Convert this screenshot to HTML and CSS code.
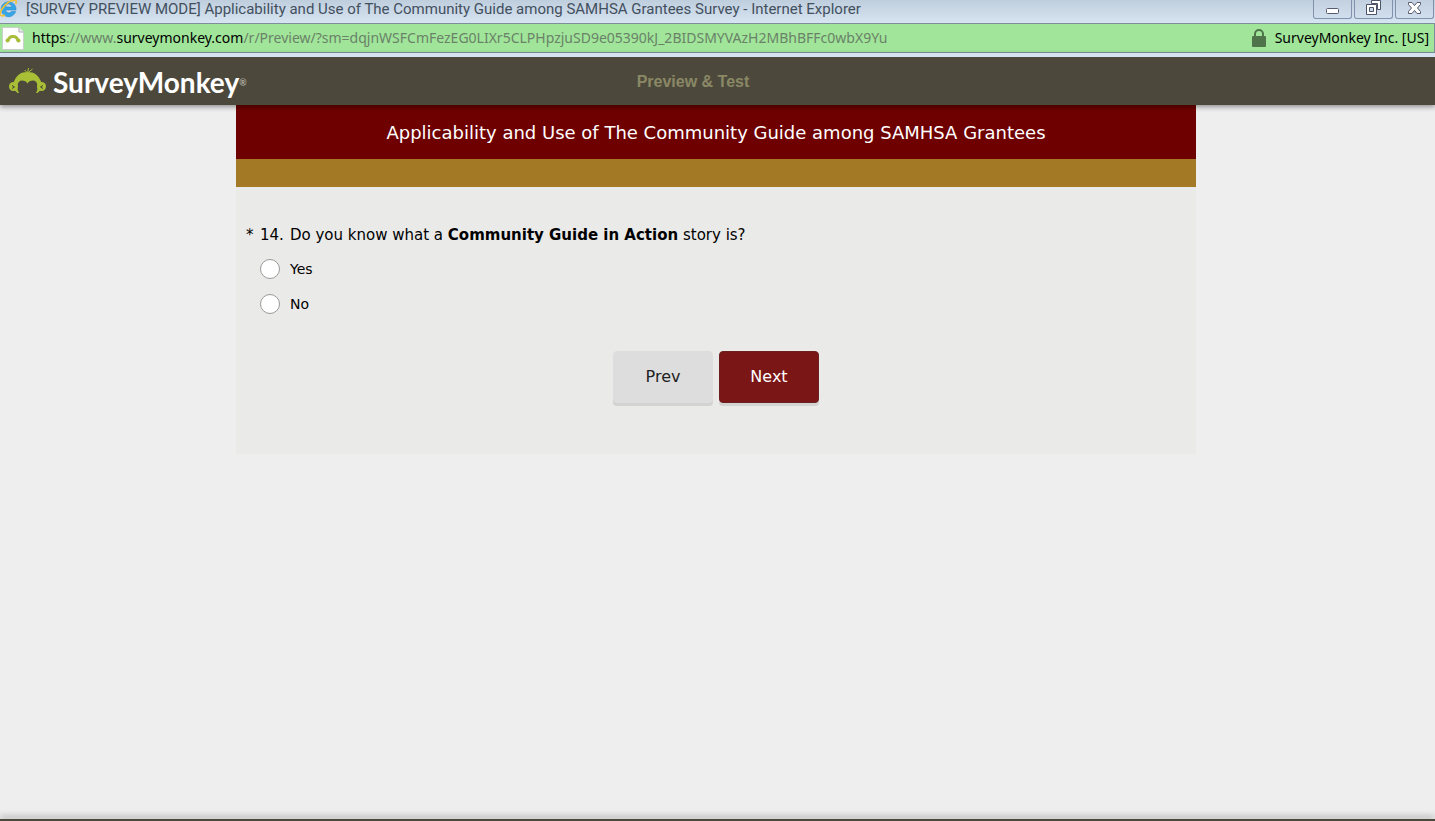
FILE: index.html
```html
<!DOCTYPE html>
<html lang="en">
<head>
  <meta charset="utf-8">
  <title>[SURVEY PREVIEW MODE] Applicability and Use of The Community Guide among SAMHSA Grantees Survey</title>
  <link rel="stylesheet" href="styles.css">
</head>
<body>
  <div class="title-bar">
    <svg class="ie-icon" width="18" height="18" viewBox="0 0 18 18" aria-hidden="true">
      <path d="M16 10H5.500a3.300 3.300 0 0 0 6 1.500h4.200A7.500 7.500 0 1 1 16 8.500zM5.600 7h6.200a3.100 3.100 0 0 0-6.200 0z" fill="#35a7e8" stroke="#1c7fc2" stroke-width=".5" fill-rule="evenodd"/>
      <path d="M0 14C1 8 8 1 14 0c3 0 2.500 3 1.500 4M0 13c0 4 3 3 5 2" fill="none" stroke="#f2c033" stroke-width="1.500"/>
    </svg>
    <span class="window-title">[SURVEY PREVIEW MODE] Applicability and Use of The Community Guide among SAMHSA Grantees Survey - Internet Explorer</span>
    <div class="window-buttons">
      <button type="button" aria-label="Minimize">
        <svg width="16" height="18" viewBox="0 0 16 18"><rect x="1.500" y="8.500" width="12" height="5" rx="1" fill="#fff" stroke="#555b70"/></svg>
      </button>
      <button type="button" aria-label="Restore">
        <svg width="16" height="18" viewBox="0 0 16 18" fill="#fff" stroke="#4c5268" fill-rule="evenodd">
          <path d="M5.500.5h9v9h-3v-6h-6z"/>
          <path d="M.5 4.500h10v10H.5zM3.500 7.500h4v4h-4z"/>
        </svg>
      </button>
      <button type="button" aria-label="Close">
        <svg width="16" height="18" viewBox="0 0 16 18"><path d="M1.500 2.500H5l2.500 3 2.500-3h3.500v2l-3 3.500 3 3.500v2H10l-2.500-3-2.500 3H1.500v-2l3-3.500-3-3.500z" fill="#fff" stroke="#555b70"/></svg>
      </button>
    </div>
  </div>

  <div class="address-bar">
    <svg class="page-icon" width="22" height="23" viewBox="0 0 22 23" aria-hidden="true">
      <path d="M.5.500H17L21.500 5v17.500H.5z" fill="#fff" stroke="#c9d2c9"/>
      <path d="M17 .5V5h4.500" fill="#eee" stroke="#aaa"/>
      <path d="M6 14c1-6 9-6 10 0" fill="none" stroke="#a9bd3b" stroke-width="3"/>
      <circle cx="5.500" cy="13.500" r="2" fill="#a9bd3b"/><circle cx="16.500" cy="13.500" r="2" fill="#a9bd3b"/>
    </svg>
    <div class="url" role="textbox" aria-label="Address" contenteditable="true" spellcheck="false"><b>https</b>://www.<b>surveymonkey.com</b>/r/Preview/?sm=dqjnWSFCmFezEG0LIXr5CLPHpzjuSD9e05390kJ_2BIDSMYVAzH2MBhBFFc0wbX9Yu</div>
    <svg class="lock" width="14" height="18" viewBox="0 0 14 18" aria-hidden="true">
      <path d="M3 9V5a4 4 0 0 1 8 0v4" fill="none" stroke="#4f744b" stroke-width="2"/>
      <rect y="7" width="14" height="11" rx="1" fill="#4f744b"/>
    </svg>
    <span class="company">SurveyMonkey Inc. [US]</span>
  </div>

  <header class="preview-header">
    <a class="logo" href="#">
      <svg width="38" height="30" viewBox="0 0 38 30" aria-hidden="true">
        <g fill="#a9bf35">
          <circle cx="5.500" cy="19.500" r="4.500"/>
          <circle cx="33.500" cy="19.500" r="4.500"/>
          <path d="M5.500 16C8 8 13 5 19.500 5S31 8 33.500 16l-.5 6.500-3.500 3.500h-1.500c3-5 2-12.500-3-12.500-2.500 0-4.500 1-5.500 3-1-2-3-3-5.500-3-5 0-6 7.500-3 12.500H9.500L6 22.500z"/>
        </g>
        <path d="M19.500 6l5-4M19.500 6l-3-3M19.500 6l1-5" stroke="#a9bf35" fill="none"/>
        <path d="M4 18.500l2.500 1.500-2.500 1.500M35 18.500L32.500 20l2.500 1.500" stroke="#4c493c" fill="none"/>
      </svg>
      <span>SurveyMonkey</span><sup>®</sup>
    </a>
    <strong class="preview-label">Preview &amp; Test</strong>
  </header>

  <main>
    <form class="survey">
      <h1>Applicability and Use of The Community Guide among SAMHSA Grantees</h1>
      <div class="page-band"></div>
      <fieldset>
        <legend><span class="required">*</span><span class="number">14.</span><span>Do you know what a <b>Community Guide in Action</b> story is?</span></legend>
        <label class="answer"><input type="radio" name="q14" value="yes">Yes</label>
        <label class="answer"><input type="radio" name="q14" value="no">No</label>
      </fieldset>
      <div class="survey-buttons">
        <button type="button" class="prev">Prev</button>
        <button type="submit" class="next">Next</button>
      </div>
    </form>
  </main>
  <footer></footer>
</body>
</html>
```

FILE: styles.css
```css
* {
  box-sizing: border-box;
}

body {
  display: flex;
  flex-direction: column;
  min-height: 100vh;
  margin: 0;
  background: #eee;
  color: #000;
  font-family: "DejaVu Sans", sans-serif;
}

.title-bar {
  display: flex;
  align-items: flex-start;
  height: 23px;
  padding-right: 1px;
  background: linear-gradient(#bfcedd, #d7e4f2);
  color: #42505e;
  font: 15px/18px Roboto, "Noto Sans", sans-serif;
}

.ie-icon {
  margin-right: 8px;
}

.window-title {
  flex: 1;
  white-space: nowrap;
}

.window-buttons {
  display: flex;
  gap: 2px;
}

.window-buttons button {
  width: 39px;
  height: 19px;
  padding: 0;
  border: 1px solid #8292ae;
  border-top: 0;
  border-radius: 0 0 3px 3px;
  background: linear-gradient(#c3d0df, #d0deed);
}

.window-buttons svg {
  display: block;
  margin: 0 auto;
}

.address-bar {
  display: flex;
  align-items: center;
  height: 30px;
  padding: 0 5px 0 2px;
  border: 1px solid #7d8f9a;
  border-left: 0;
  background: #a0e59a;
  font: 14px/20px "Noto Sans", sans-serif;
}

.url {
  flex: 1;
  margin-left: 8px;
  color: #6a8268;
  white-space: nowrap;
  outline: none;
}

.url b {
  color: #000;
  font-weight: normal;
}

.lock {
  margin-right: 9px;
}

.preview-header {
  display: grid;
  grid-template-columns: 1fr auto 1fr;
  align-items: center;
  height: 52px;
  padding: 2px 57px 0 8px;
  border-top: 4px solid #d5e2f0;
  background: #4c493c;
  box-shadow: 0 2px 5px rgba(0, 0, 0, 0.4);
  z-index: 1;
}

.logo {
  display: flex;
  align-items: center;
  color: #fff;
  font: bold 28px/30px Lato, sans-serif;
  text-decoration: none;
}

.logo span {
  margin-left: 7px;
}

.logo sup {
  color: #aaa89f;
  font-size: 9px;
  line-height: 9px;
}

.preview-label {
  color: #8a8865;
  font: bold 16px/20px "Liberation Sans", sans-serif;
}

main {
  flex: 1;
  padding-right: 3px;
}

.survey {
  max-width: 960px;
  margin: 0 auto;
  padding-bottom: 51px;
  background: #eaeae8;
}

.survey h1 {
  margin: 0;
  padding: 16px 10px 14px;
  background: #6e0000;
  color: #fff;
  font-size: 18px;
  font-weight: normal;
  line-height: 24px;
  text-align: center;
}

.page-band {
  height: 28px;
  background: #a37926;
}

fieldset {
  margin: 0;
  padding: 36px 10px 0;
  border: 0;
}

legend {
  display: flex;
  float: left;
  width: 100%;
  margin-bottom: 4px;
  padding: 0;
  font-size: 15px;
  line-height: 24px;
}

.required {
  width: 14px;
}

.number {
  width: 30px;
}

.answer {
  display: flex;
  clear: both;
  align-items: center;
  gap: 10px;
  height: 35px;
  padding-left: 14px;
  font-size: 14px;
}

.answer input {
  appearance: none;
  width: 20px;
  height: 20px;
  margin: 0;
  border: 1px solid #999;
  border-radius: 50%;
  background: #fff;
}

.answer input:checked {
  border: 6px solid #6e0000;
}

.survey-buttons {
  display: flex;
  justify-content: center;
  gap: 6px;
  padding-top: 30px;
}

.survey-buttons button {
  width: 100px;
  height: 52px;
  border: 1px solid #ddd;
  border-radius: 4px;
  background: #ddd;
  box-shadow: 0 3px 0 #d3d3d2;
  color: #222;
  font: 16px/20px "DejaVu Sans", sans-serif;
}

.survey-buttons .next {
  border-color: #6c2020;
  background: #7a1616;
  color: #fff;
}

footer {
  height: 2px;
  background: #4c493c;
  box-shadow: 0 -2px 6px rgba(0, 0, 0, 0.5);
}
```
